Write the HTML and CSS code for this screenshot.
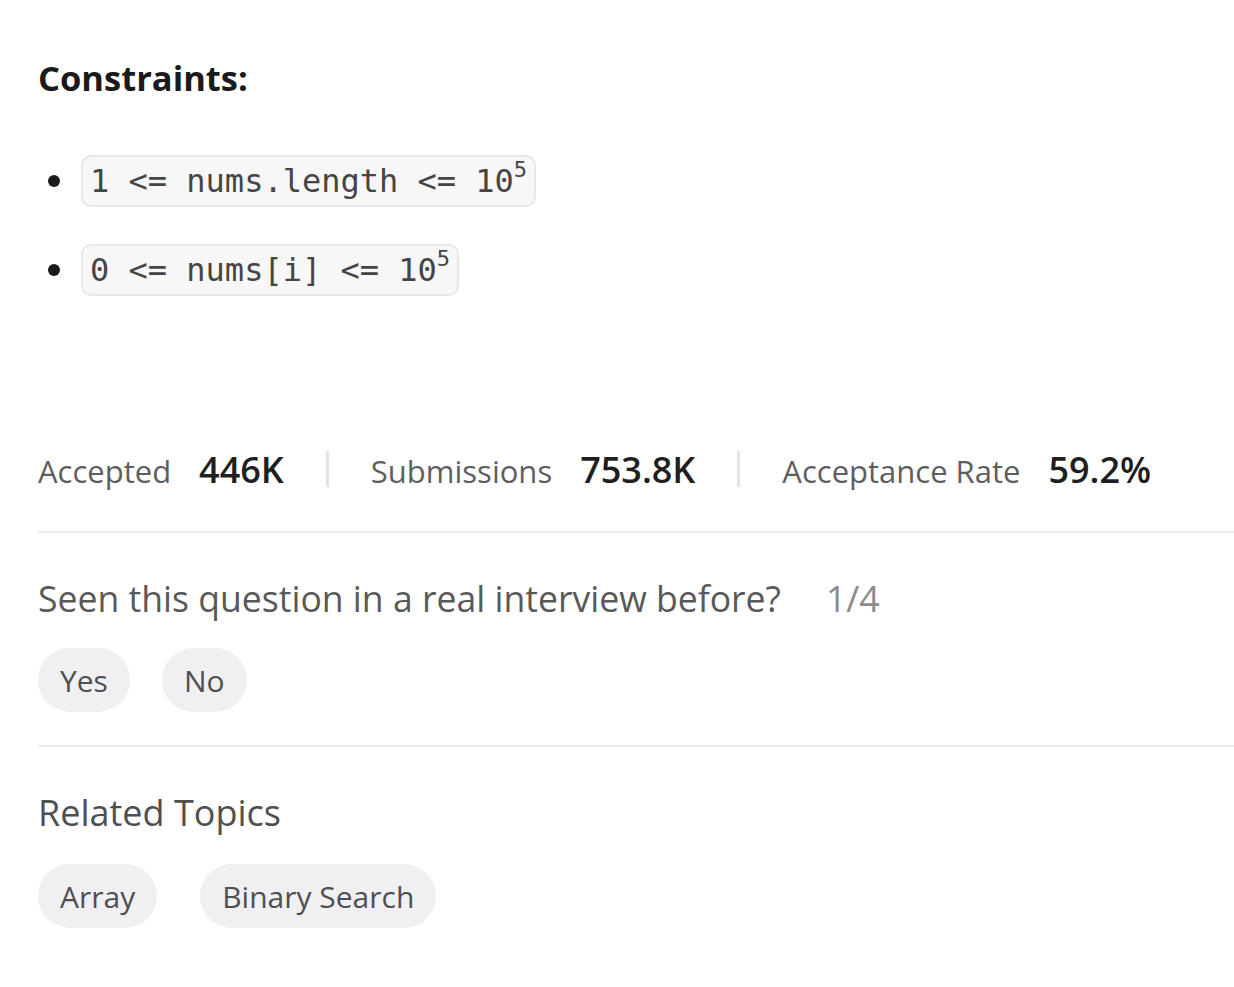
FILE: index.html
```html
<!DOCTYPE html>
<html>
<head>
<meta charset="utf-8">
<link rel="stylesheet" href="styles.css">
</head>
<body>
<div class="page">
  <h3 class="heading">Constraints:</h3>
  <ul class="constraints">
    <li><code>1 &lt;= nums.length &lt;= 10<sup>5</sup></code></li>
    <li><code>0 &lt;= nums[i] &lt;= 10<sup>5</sup></code></li>
  </ul>

  <div class="stats">
    <div class="stat"><span class="label">Accepted</span><span class="value">446K</span></div>
    <div class="divider"></div>
    <div class="stat"><span class="label">Submissions</span><span class="value">753.8K</span></div>
    <div class="divider"></div>
    <div class="stat"><span class="label">Acceptance Rate</span><span class="value">59.2%</span></div>
  </div>

  <div class="section interview">
    <div class="question"><span class="qtext">Seen this question in a real interview before?</span><span class="count">1/4</span></div>
    <div class="pills">
      <span class="pill">Yes</span>
      <span class="pill">No</span>
    </div>
  </div>

  <div class="section topics">
    <div class="title">Related Topics</div>
    <div class="pills wide">
      <span class="pill">Array</span>
      <span class="pill">Binary Search</span>
    </div>
  </div>
</div>
</body>
</html>
```

FILE: styles.css
```css
html, body {
  margin: 0;
  padding: 0;
  background: #ffffff;
}
body {
  font-family: "Open Sans", "Noto Sans", sans-serif;
  color: #262626;
}
.page {
  padding: 56px 0 0 38px;
}
.heading {
  margin: 0;
  font-size: 34.5px;
  font-weight: 700;
  line-height: 44px;
  color: #1a1a1a;
}
.constraints {
  margin: 55px 0 0 0;
  padding: 0 0 0 10px;
  list-style: none;
}
.constraints li {
  display: flex;
  align-items: center;
  gap: 21px;
  margin-bottom: 37px;
  height: 52px;
}
.constraints li::before {
  content: "";
  width: 12px;
  height: 12px;
  border-radius: 50%;
  background: #1a1a1a;
  flex: none;
}
code {
  display: block;
  box-sizing: border-box;
  height: 52px;
  font-family: "DejaVu Sans Mono", monospace;
  font-size: 32px;
  line-height: 48px;
  padding: 0 7px 0 7px;
  background: #f7f7f8;
  border: 2px solid #e8e8ea;
  border-radius: 10px;
  color: #454545;
}
code sup {
  font-size: 22px;
  line-height: 0;
  vertical-align: 15px;
}
.stats {
  display: flex;
  align-items: center;
  margin-top: 151px;
  height: 44px;
  padding-bottom: 40px;
  border-bottom: 2px solid #ececec;
}
.stat {
  display: flex;
  align-items: baseline;
  gap: 28px;
}
.label {
  font-size: 31px;
  color: #5e5e5e;
}
.value {
  font-size: 36px;
  font-weight: 600;
  color: #1f1f1f;
}
.divider {
  width: 3px;
  height: 36px;
  background: #e4e4e4;
  margin: 0 42px;
}
.section {
  border-bottom: 2px solid #ececec;
}
.interview {
  padding-top: 40px;
  padding-bottom: 33px;
}
.question {
  display: flex;
  align-items: baseline;
  gap: 45px;
  font-size: 35.6px;
  line-height: 50px;
}
.qtext {
  color: #595959;
}
.count {
  color: #8a8a8a;
}
.pills {
  display: flex;
  gap: 32px;
  margin-top: 25px;
}
.pills.wide {
  gap: 43px;
  margin-top: 26px;
}
.pill {
  display: inline-flex;
  align-items: center;
  height: 64px;
  padding: 0 22px;
  border-radius: 32px;
  background: #f0f0f2;
  color: #4f4f4f;
  font-size: 30px;
}
.topics {
  border-bottom: none;
  padding-top: 41px;
}
.title {
  font-size: 36px;
  line-height: 50px;
  color: #4f4f4f;
}
```
